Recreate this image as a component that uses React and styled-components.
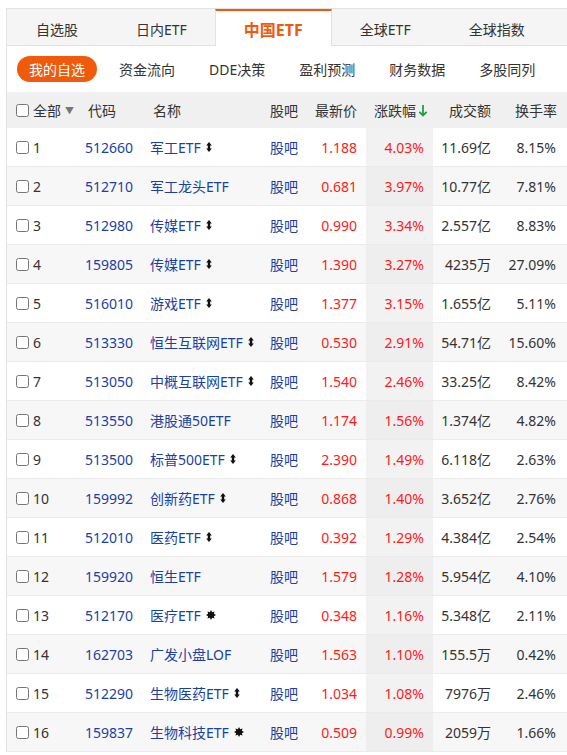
import React from 'react'
import styled, { createGlobalStyle } from 'styled-components'

const ORANGE = '#f05a0c'
const BLUE = '#1b3fa3'
const RED = '#ff1a1a'

const tabs = ['自选股', '日内ETF', '中国ETF', '全球ETF', '全球指数']
const subTabs = ['我的自选', '资金流向', 'DDE决策', '盈利预测', '财务数据', '多股同列']

// mark: 'r' = 融资融券 arrow, 's' = star
const rows = [
  ['512660', '军工ETF', 'r', '1.188', '4.03%', '11.69亿', '8.15%'],
  ['512710', '军工龙头ETF', '', '0.681', '3.97%', '10.77亿', '7.81%'],
  ['512980', '传媒ETF', 'r', '0.990', '3.34%', '2.557亿', '8.83%'],
  ['159805', '传媒ETF', 'r', '1.390', '3.27%', '4235万', '27.09%'],
  ['516010', '游戏ETF', 'r', '1.377', '3.15%', '1.655亿', '5.11%'],
  ['513330', '恒生互联网ETF', 'r', '0.530', '2.91%', '54.71亿', '15.60%'],
  ['513050', '中概互联网ETF', 'r', '1.540', '2.46%', '33.25亿', '8.42%'],
  ['513550', '港股通50ETF', '', '1.174', '1.56%', '1.374亿', '4.82%'],
  ['513500', '标普500ETF', 'r', '2.390', '1.49%', '6.118亿', '2.63%'],
  ['159992', '创新药ETF', 'r', '0.868', '1.40%', '3.652亿', '2.76%'],
  ['512010', '医药ETF', 'r', '0.392', '1.29%', '4.384亿', '2.54%'],
  ['159920', '恒生ETF', '', '1.579', '1.28%', '5.954亿', '4.10%'],
  ['512170', '医疗ETF', 's', '0.348', '1.16%', '5.348亿', '2.11%'],
  ['162703', '广发小盘LOF', '', '1.563', '1.10%', '155.5万', '0.42%'],
  ['512290', '生物医药ETF', 'r', '1.034', '1.08%', '7976万', '2.46%'],
  ['159837', '生物科技ETF', 's', '0.509', '0.99%', '2059万', '1.66%'],
]

const GlobalStyle = createGlobalStyle`
  html, body {
    margin: 0;
    padding: 0;
    background: #fff;
    overflow: hidden;
  }
  body {
    font-family: "Noto Sans", "Noto Sans CJK SC", sans-serif;
    font-size: 14px;
    color: #333;
  }
`

const Page = styled.div`
  margin: 8px 0 0 6px;
  width: 575px;
  border-left: 1px solid #e3e3e3;
`

const TabBar = styled.div`
  display: flex;
  height: 36px;
  background: #f5f5f5;
  border-top: 1px solid #e2e2e2;
  border-bottom: 1px solid #e2e2e2;
`

const Tab = styled.div`
  display: flex;
  align-items: center;
  box-sizing: border-box;
  height: 37px;
  margin-bottom: -1px;
  padding: 0 28px;
  font-size: ${(p) => (p.$active ? '16px' : '14px')};
  font-weight: ${(p) => (p.$active ? 700 : 400)};
  color: ${(p) => (p.$active ? ORANGE : '#333')};
  background: ${(p) => (p.$active ? '#fff' : 'transparent')};
  border-top: 2px solid ${(p) => (p.$active ? ORANGE : 'transparent')};
  border-left: 1px solid ${(p) => (p.$active ? '#e2e2e2' : 'transparent')};
  border-right: 1px solid ${(p) => (p.$active ? '#e2e2e2' : 'transparent')};
  margin-left: ${(p) => (p.$active ? '-1px' : '0')};
  margin-right: ${(p) => (p.$active ? '-1px' : '0')};
`

const SubNav = styled.div`
  display: flex;
  align-items: center;
  gap: 10px;
  height: 46px;
  padding-left: 10px;
`

const SubTab = styled.div`
  display: flex;
  align-items: center;
  height: 26px;
  padding: 0 12px;
  border-radius: 13px;
  font-size: 14px;
  color: ${(p) => (p.$active ? '#fff' : '#333')};
  background: ${(p) => (p.$active ? ORANGE : 'transparent')};
`

const COLS = '68px 65px 120px 40px 66px 67px 67px 65px'

const HeadRow = styled.div`
  display: grid;
  grid-template-columns: ${COLS};
  height: 36px;
  background: #f0f0f0;
`

const Row = styled.div`
  display: grid;
  grid-template-columns: ${COLS};
  box-sizing: border-box;
  height: 39px;
  border-bottom: 1px solid #ebebeb;
  background: ${(p) => (p.$even ? '#f7f7f7' : '#fff')};
`

const Cell = styled.div`
  display: flex;
  align-items: center;
  justify-content: ${(p) => (p.$right ? 'flex-end' : 'flex-start')};
  padding-left: ${(p) => p.$pl || 0}px;
  padding-right: ${(p) => p.$pr || 0}px;
  color: ${(p) => p.$color || '#333'};
  background: ${(p) => p.$bg || 'transparent'};
  white-space: nowrap;
  overflow: hidden;
`

const Check = styled.input`
  width: 13px;
  height: 13px;
  margin: 0 4px 0 0;
`

const Caret = styled.span`
  margin-left: 4px;
  font-size: 9px;
  color: #777;
`

const Mark = styled.svg`
  margin-left: 5px;
  flex: none;
`

const SortArrow = () => (
  <Mark width="10" height="13" viewBox="0 0 10 13" style={{ marginLeft: 2 }}>
    <path d="M5 1 V11.5 M1.3 7.8 L5 11.5 L8.7 7.8" fill="none" stroke="#1f9e48" strokeWidth="1.8" />
  </Mark>
)

const RongMark = () => (
  <Mark width="6" height="10" viewBox="0 0 6 10">
    <path d="M3 0 L5.8 3.4 H4.2 V6.6 H5.8 L3 10 L0.2 6.6 H1.8 V3.4 H0.2 Z" fill="#111" />
  </Mark>
)

const starPoints = Array.from({ length: 16 }, (_, i) => {
  const a = (Math.PI * i) / 8 - Math.PI / 2
  const r = i % 2 === 0 ? 5 : 3.1
  return `${(5 + r * Math.cos(a)).toFixed(2)},${(5 + r * Math.sin(a)).toFixed(2)}`
}).join(' ')

const StarMark = () => (
  <Mark width="10" height="10" viewBox="0 0 10 10">
    <polygon points={starPoints} fill="#111" />
  </Mark>
)

export default function App() {
  return (
    <Page>
      <GlobalStyle />
      <TabBar>
        {tabs.map((t, i) => (
          <Tab key={t} $active={i === 2}>{t}</Tab>
        ))}
      </TabBar>
      <SubNav>
        {subTabs.map((t, i) => (
          <SubTab key={t} $active={i === 0}>{t}</SubTab>
        ))}
      </SubNav>
      <HeadRow>
        <Cell $pl={9}>
          <Check type="checkbox" defaultChecked={false} />
          全部<Caret>▼</Caret>
        </Cell>
        <Cell $pl={13}>代码</Cell>
        <Cell $pl={13}>名称</Cell>
        <Cell $pl={10}>股吧</Cell>
        <Cell $right $pr={9}>最新价</Cell>
        <Cell $right $pr={5}>涨跌幅<SortArrow /></Cell>
        <Cell $right $pr={9}>成交额</Cell>
        <Cell $right $pr={8}>换手率</Cell>
      </HeadRow>
      {rows.map((r, i) => {
        const even = i % 2 === 1
        return (
          <Row key={r[0] + i} $even={even}>
            <Cell $pl={9}>
              <Check type="checkbox" defaultChecked={false} />
              {i + 1}
            </Cell>
            <Cell $pl={10} $color={BLUE}>{r[0]}</Cell>
            <Cell $pl={10} $color={BLUE}>
              {r[1]}
              {r[2] === 'r' && <RongMark />}
              {r[2] === 's' && <StarMark />}
            </Cell>
            <Cell $pl={10} $color={BLUE}>股吧</Cell>
            <Cell $right $pr={9} $color={RED}>{r[3]}</Cell>
            <Cell $right $pr={9} $color={RED} $bg={even ? '#eeeeee' : '#f2f2f2'}>{r[4]}</Cell>
            <Cell $right $pr={9}>{r[5]}</Cell>
            <Cell $right $pr={9}>{r[6]}</Cell>
          </Row>
        )
      })}
    </Page>
  )
}
